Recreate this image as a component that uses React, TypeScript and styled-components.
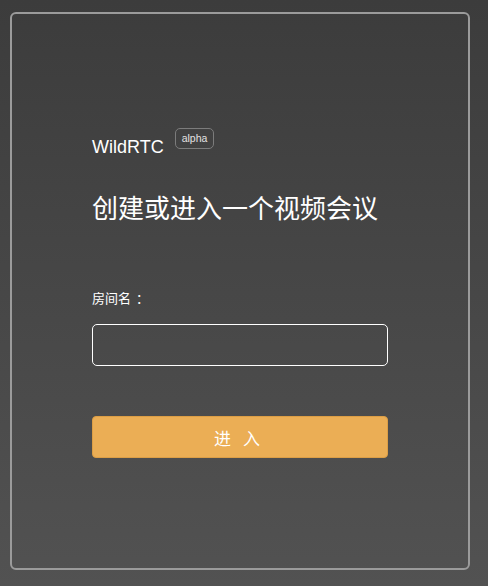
import React from "react";
import styled, { createGlobalStyle } from "styled-components";

const Global = createGlobalStyle`
  html, body { margin: 0; padding: 0; }
  body {
    min-height: 586px;
    background: linear-gradient(180deg, #3c3c3c 0%, #525252 100%);
    font-family: "Liberation Sans", "Noto Sans CJK SC", sans-serif;
    color: #fff;
  }
  #root { height: 586px; display: flow-root; }
`;

const Card = styled.div`
  box-sizing: border-box;
  height: 558px;
  margin: 12px 18px 16px 10px;
  border: 2px solid #9b9b9b;
  border-radius: 6px;
  display: flex;
  justify-content: center;
`;

const Content = styled.div`
  width: 296px;
  padding-top: 121px;
  display: flex;
  flex-direction: column;
`;

const Brand = styled.div`
  display: flex;
  align-items: flex-start;
  gap: 11px;
`;

const BrandName = styled.span`
  font-family: "Liberation Sans", Arial, sans-serif;
  font-size: 18px;
  line-height: 22px;
  margin-top: 1px;
  color: #fff;
`;

const Badge = styled.span`
  box-sizing: border-box;
  height: 21px;
  padding: 0 6px;
  border: 1px solid #7c7c7c;
  border-radius: 5px;
  font-family: "Liberation Sans", Arial, sans-serif;
  font-size: 10.5px;
  line-height: 18px;
  color: #e2e2e2;
  margin-top: -7px;
`;

const Title = styled.h1`
  margin: 34px 0 0;
  font-family: "Noto Sans CJK SC", "Liberation Sans", sans-serif;
  font-weight: 400;
  font-size: 26px;
  line-height: 30px;
  color: #fff;
`;

const Label = styled.label`
  margin-top: 68px;
  font-family: "Noto Sans CJK SC", "Liberation Sans", sans-serif;
  font-size: 13px;
  line-height: 16px;
  color: #fff;
`;

const Colon = styled.span`
  padding-left: 5px;
`;

const Input = styled.input`
  box-sizing: border-box;
  margin-top: 18px;
  width: 296px;
  height: 42px;
  border: 1px solid #fff;
  border-radius: 5px;
  background: transparent;
  outline: none;
  color: #fff;
  font-size: 15px;
  padding: 0 10px;
`;

const Button = styled.button`
  box-sizing: border-box;
  margin-top: 50px;
  width: 296px;
  height: 42px;
  border: 1px solid #dc9e45;
  border-radius: 4px;
  background: #ebae55;
  color: #fff;
  font-family: "Noto Sans CJK SC", "Liberation Sans", sans-serif;
  font-size: 17px;
  letter-spacing: 4px;
  padding-left: 4px;
  cursor: pointer;
`;

export default function App() {
  return (
    <>
      <Global />
      <Card>
        <Content>
          <Brand>
            <BrandName>WildRTC</BrandName>
            <Badge>alpha</Badge>
          </Brand>
          <Title>创建或进入一个视频会议</Title>
          <Label htmlFor="room">
            房间名<Colon>：</Colon>
          </Label>
          <Input id="room" type="text" />
          <Button type="button">进 入</Button>
        </Content>
      </Card>
    </>
  );
}
